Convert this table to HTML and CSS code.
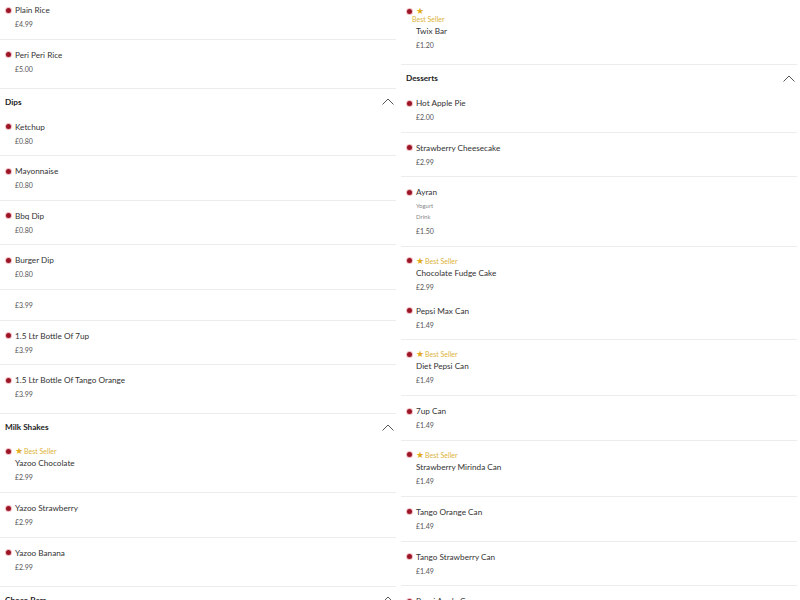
FILE: index.html
```html
<!DOCTYPE html>
<html lang="en">
<head>
    <meta charset="UTF-8">
    <meta name="viewport" content="width=device-width, initial-scale=1.0">
    <title>Menu</title>
    <link rel="stylesheet" href="styles.css">
</head>
<body>
    <div class="menu">

        <!-- Left column -->
        <div class="column column-left">
            <div class="section">
                <div class="item">
                    <div class="line"><span class="dot"></span><span class="name">Plain Rice</span></div>
                    <div class="price">£4.99</div>
                </div>
                <div class="item">
                    <div class="line"><span class="dot"></span><span class="name">Peri Peri Rice</span></div>
                    <div class="price">£5.00</div>
                </div>
            </div>

            <div class="section">
                <div class="section-head">
                    <span>Dips</span>
                    <svg class="chevron" width="12" height="7" viewBox="0 0 12 7"><polyline points="0.5,6.5 6,1 11.5,6.5" fill="none" stroke="#555" stroke-width="1"/></svg>
                </div>
                <div class="item">
                    <div class="line"><span class="dot"></span><span class="name">Ketchup</span></div>
                    <div class="price">£0.80</div>
                </div>
                <div class="item">
                    <div class="line"><span class="dot"></span><span class="name">Mayonnaise</span></div>
                    <div class="price">£0.80</div>
                </div>
                <div class="item">
                    <div class="line"><span class="dot"></span><span class="name">Bbq Dip</span></div>
                    <div class="price">£0.80</div>
                </div>
                <div class="item">
                    <div class="line"><span class="dot"></span><span class="name">Burger Dip</span></div>
                    <div class="price">£0.80</div>
                </div>
                <div class="item">
                    <div class="price">£3.99</div>
                </div>
                <div class="item">
                    <div class="line"><span class="dot"></span><span class="name">1.5 Ltr Bottle Of 7up</span></div>
                    <div class="price">£3.99</div>
                </div>
                <div class="item">
                    <div class="line"><span class="dot"></span><span class="name">1.5 Ltr Bottle Of Tango Orange</span></div>
                    <div class="price">£3.99</div>
                </div>
            </div>

            <div class="section">
                <div class="section-head">
                    <span>Milk Shakes</span>
                    <svg class="chevron" width="12" height="7" viewBox="0 0 12 7"><polyline points="0.5,6.5 6,1 11.5,6.5" fill="none" stroke="#555" stroke-width="1"/></svg>
                </div>
                <div class="item best">
                    <div class="line"><span class="dot"></span><span class="badge"><span class="star">★</span>Best Seller</span></div>
                    <div class="name indent">Yazoo Chocolate</div>
                    <div class="price">£2.99</div>
                </div>
                <div class="item">
                    <div class="line"><span class="dot"></span><span class="name">Yazoo Strawberry</span></div>
                    <div class="price">£2.99</div>
                </div>
                <div class="item">
                    <div class="line"><span class="dot"></span><span class="name">Yazoo Banana</span></div>
                    <div class="price">£2.99</div>
                </div>
            </div>

            <div class="section">
                <div class="section-head">
                    <span>Choco Bars</span>
                    <svg class="chevron" width="12" height="7" viewBox="0 0 12 7"><polyline points="0.5,6.5 6,1 11.5,6.5" fill="none" stroke="#555" stroke-width="1"/></svg>
                </div>
            </div>
        </div>

        <!-- Right column -->
        <div class="column column-right">
            <div class="section">
                <div class="item best narrow">
                    <div class="line small"><span class="dot"></span><span class="star">★</span></div>
                    <div class="badge wrapped">Best Seller</div>
                    <div class="name indent">Twix Bar</div>
                    <div class="price">£1.20</div>
                </div>
            </div>

            <div class="section">
                <div class="section-head">
                    <span>Desserts</span>
                    <svg class="chevron" width="12" height="7" viewBox="0 0 12 7"><polyline points="0.5,6.5 6,1 11.5,6.5" fill="none" stroke="#555" stroke-width="1"/></svg>
                </div>
                <div class="item">
                    <div class="line"><span class="dot"></span><span class="name">Hot Apple Pie</span></div>
                    <div class="price">£2.00</div>
                </div>
                <div class="item">
                    <div class="line"><span class="dot"></span><span class="name">Strawberry Cheesecake</span></div>
                    <div class="price">£2.99</div>
                </div>
                <div class="item">
                    <div class="line"><span class="dot"></span><span class="name">Ayran</span></div>
                    <div class="desc">Yogurt</div>
                    <div class="desc">Drink</div>
                    <div class="price spaced">£1.50</div>
                </div>
                <div class="item best flat">
                    <div class="line"><span class="dot"></span><span class="badge"><span class="star">★</span>Best Seller</span></div>
                    <div class="name indent">Chocolate Fudge Cake</div>
                    <div class="price">£2.99</div>
                </div>
                <div class="item">
                    <div class="line"><span class="dot"></span><span class="name">Pepsi Max Can</span></div>
                    <div class="price">£1.49</div>
                </div>
                <div class="item best">
                    <div class="line"><span class="dot"></span><span class="badge"><span class="star">★</span>Best Seller</span></div>
                    <div class="name indent">Diet Pepsi Can</div>
                    <div class="price">£1.49</div>
                </div>
                <div class="item">
                    <div class="line"><span class="dot"></span><span class="name">7up Can</span></div>
                    <div class="price">£1.49</div>
                </div>
                <div class="item best">
                    <div class="line"><span class="dot"></span><span class="badge"><span class="star">★</span>Best Seller</span></div>
                    <div class="name indent">Strawberry Mirinda Can</div>
                    <div class="price">£1.49</div>
                </div>
                <div class="item">
                    <div class="line"><span class="dot"></span><span class="name">Tango Orange Can</span></div>
                    <div class="price">£1.49</div>
                </div>
                <div class="item">
                    <div class="line"><span class="dot"></span><span class="name">Tango Strawberry Can</span></div>
                    <div class="price">£1.49</div>
                </div>
                <div class="item">
                    <div class="line"><span class="dot"></span><span class="name">Pepsi Apple Can</span></div>
                    <div class="price">£1.49</div>
                </div>
            </div>
        </div>

    </div>
</body>
</html>
```

FILE: styles.css
```css
body {
    margin: 0;
    background-color: white;
    font-family: 'Lato', 'Liberation Sans', sans-serif;
    color: #333;
    overflow: hidden;
}
.menu {
    display: grid;
    grid-template-columns: 396px 396px;
    column-gap: 5px;
    align-items: start;
}
.column-left {
    margin-top: -5px;
}
.column-right {
    margin-top: -1px;
}
.section-head {
    display: flex;
    justify-content: space-between;
    align-items: center;
    padding: 7px 2px 4px 5px;
    height: 12px;
    font-size: 8.2px;
    font-weight: 700;
    color: #222;
}
.chevron {
    display: block;
}
.item {
    padding: 9px 0 8.6px 5px;
    border-bottom: 1px solid #ececec;
}
.item:last-child {
    padding-bottom: 13px;
}
.item.best {
    padding-top: 8px;
    padding-bottom: 9px;
}
.item.best:last-child {
    padding-bottom: 13px;
}
.item.flat {
    border-bottom: none;
    padding-bottom: 3px;
}
.line {
    display: flex;
    align-items: center;
    height: 12px;
    margin-bottom: 2px;
}
.item.best .line {
    margin-bottom: 0;
}
.line.small {
    height: 8px;
}
.dot {
    width: 5px;
    height: 5px;
    border-radius: 50%;
    background-color: #9c1526;
    box-shadow: 0 0 0 1px rgba(200, 40, 60, 0.3);
    margin: 0 4px 0 1px;
    flex-shrink: 0;
}
.name {
    font-size: 8.2px;
    line-height: 12px;
    color: #333;
}
.name.indent {
    display: block;
    padding-left: 10px;
    margin-bottom: 2px;
}
.badge {
    font-size: 7px;
    line-height: 12px;
    color: #dcb33a;
}
.star {
    font-size: 8.5px;
    color: #e0ac22;
    margin-right: 1px;
}
.badge.wrapped {
    display: block;
    line-height: 8px;
    padding-left: 6px;
    margin-bottom: 2px;
}
.desc {
    font-size: 6px;
    line-height: 11px;
    color: #888;
    padding-left: 10px;
}
.price {
    font-size: 7px;
    line-height: 12px;
    color: #555;
    padding-left: 10px;
}
.price.spaced {
    margin-top: 3px;
}
```
